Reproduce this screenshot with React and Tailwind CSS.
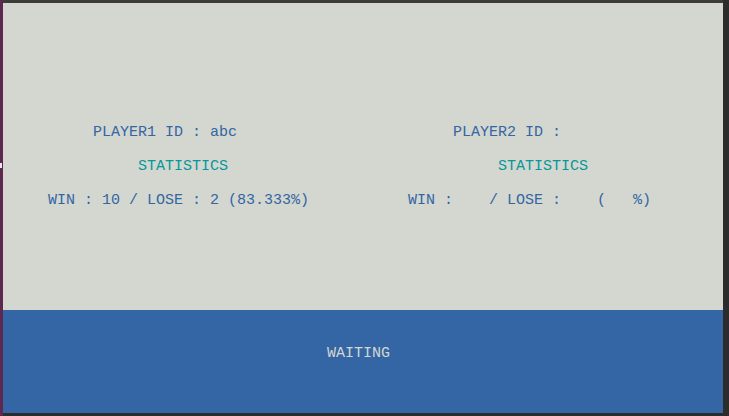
export default function App() {
  const mono = { fontFamily: '"Liberation Mono", "DejaVu Sans Mono", monospace' };

  return (
    <div className="w-[729px] h-[416px] flex bg-[#2c2c2c]">
      {/* left edge of the desktop */}
      <div className="w-[3px] h-full bg-[#5e2750] relative">
        <div className="absolute left-0 top-[163px] w-[2px] h-[5px] bg-[#e8e8e8]" />
      </div>

      <div className="flex flex-col w-[720px]">
        <div className="h-[3px] bg-[#3c3b37]" />

        {/* terminal body */}
        <div
          className="h-[307px] bg-[#d3d7cf] pt-[121px] flex flex-col gap-[17px] text-[15px] leading-[17px] whitespace-pre"
          style={mono}
        >
          <div className="text-[#3465a4]">
            {'          PLAYER1 ID : abc                        PLAYER2 ID :'}
          </div>
          <div className="text-[#06989a]">
            {'               STATISTICS                              STATISTICS'}
          </div>
          <div className="text-[#3465a4]">
            {'     WIN : 10 / LOSE : 2 (83.333%)           WIN :    / LOSE :    (   %)'}
          </div>
        </div>

        {/* status bar */}
        <div
          className="h-[103px] bg-[#3465a4] pt-[35px] text-[15px] leading-[17px] whitespace-pre text-[#d3d7cf]"
          style={mono}
        >
          {'                                    WAITING'}
        </div>

        <div className="h-[3px] bg-[#2c2c2c]" />
      </div>

      <div className="w-[6px] h-full bg-[#2c2c2c]" />
    </div>
  );
}
